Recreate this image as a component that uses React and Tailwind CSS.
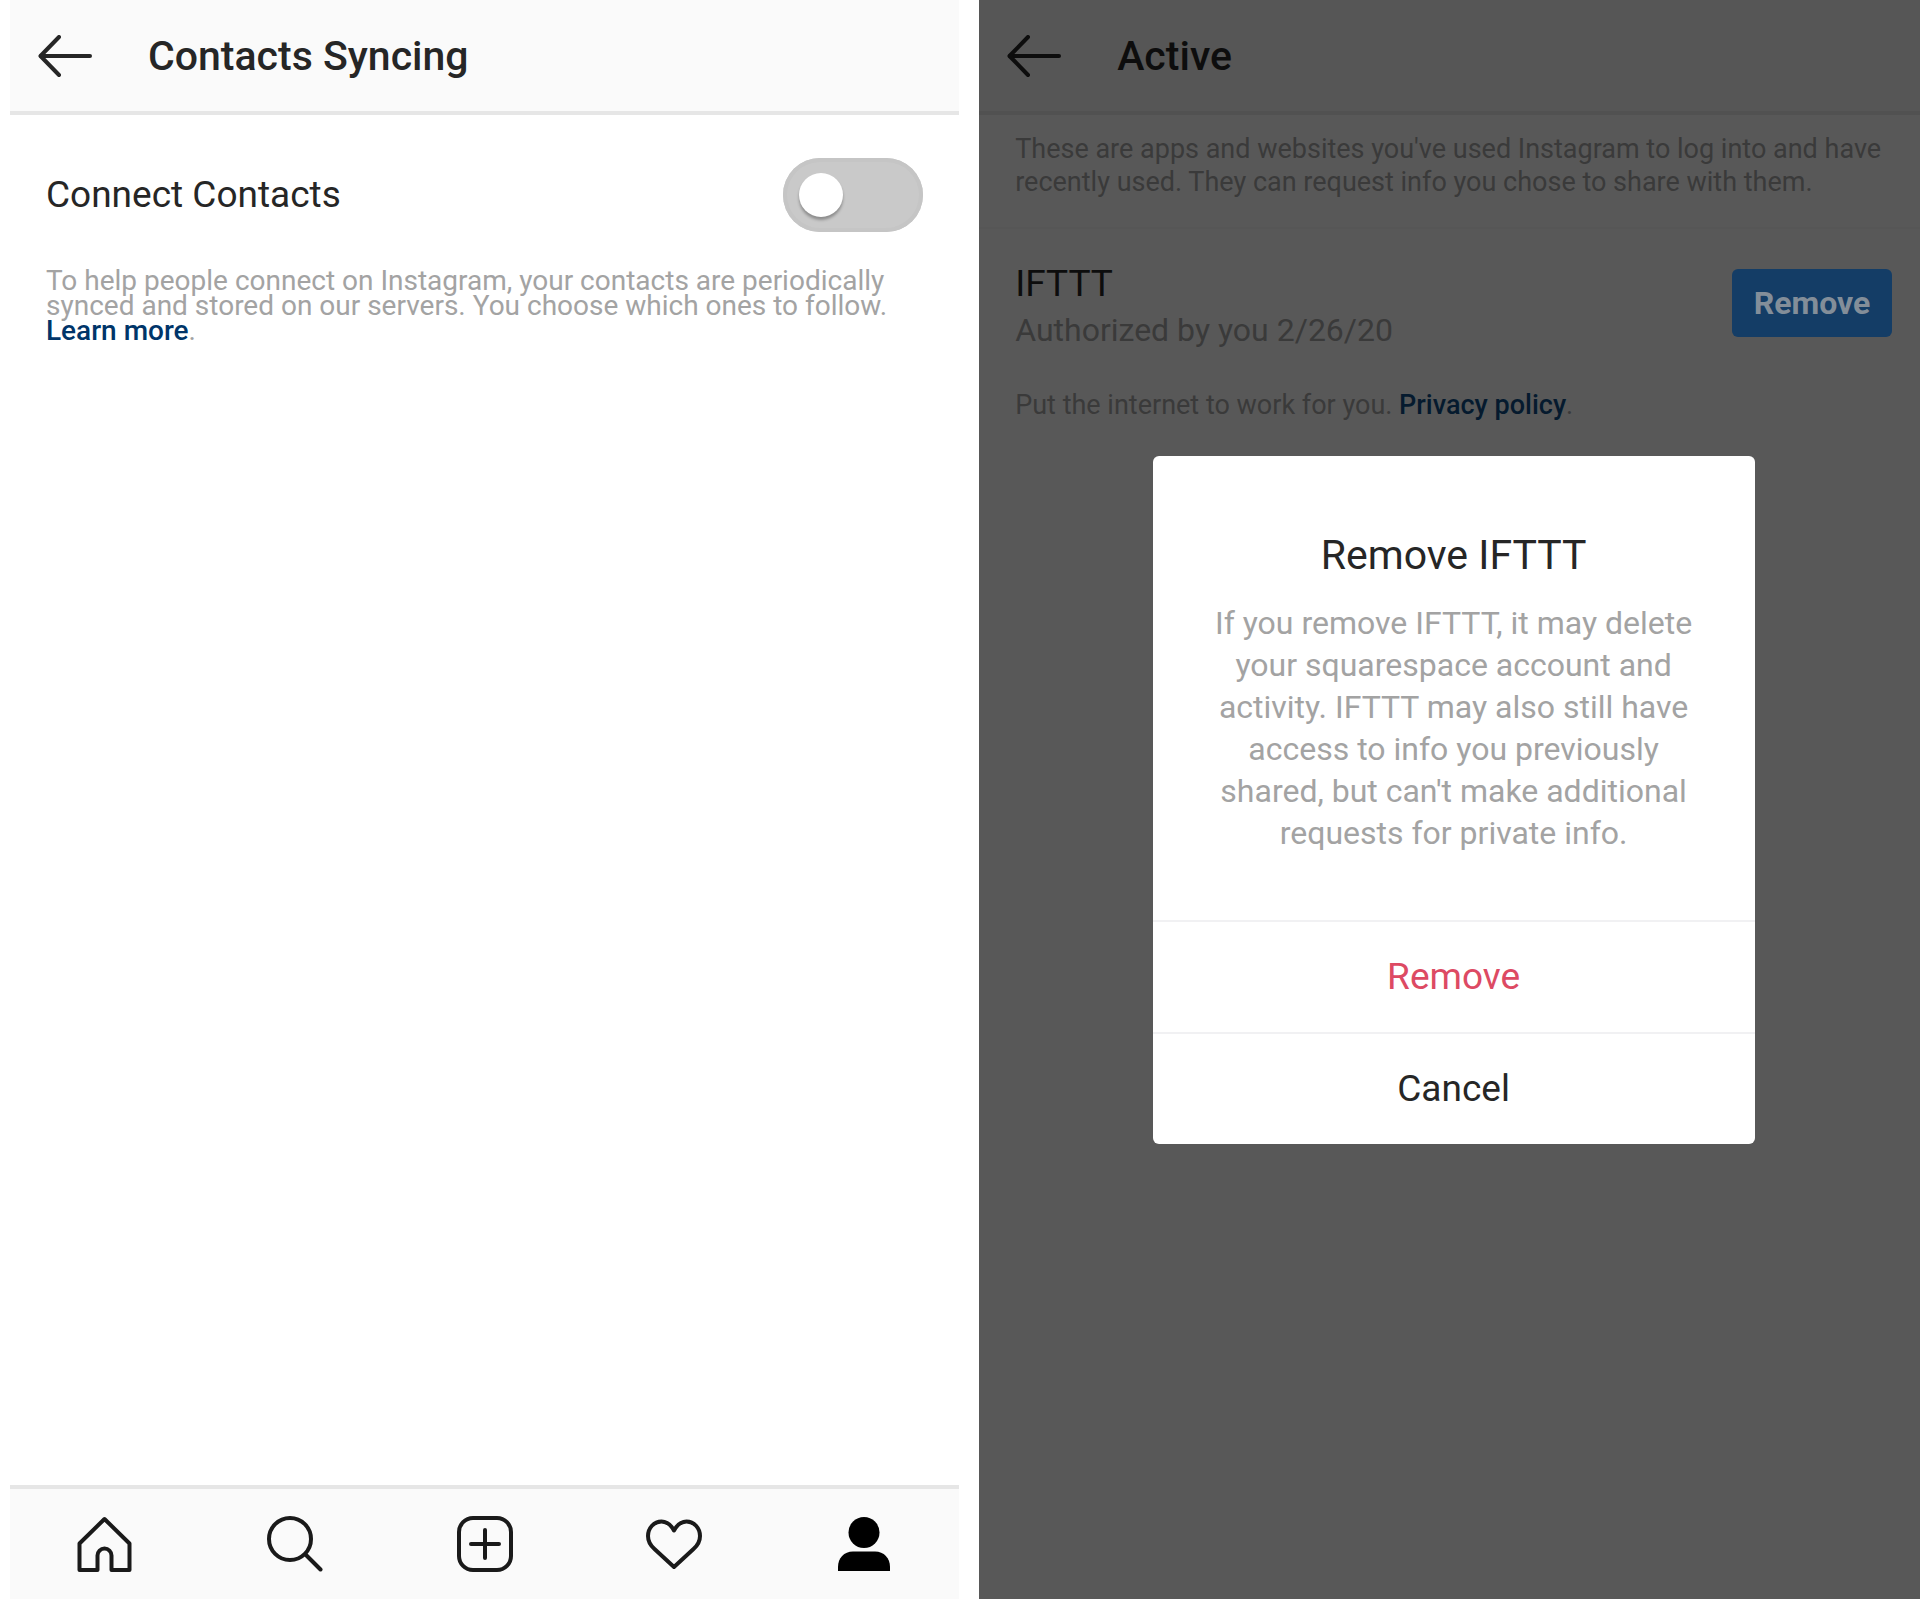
import React, { useState } from 'react';

const BackArrow = () => (
  <svg width="54" height="44" viewBox="0 0 54 44" fill="none" stroke="currentColor" strokeWidth="4" strokeLinecap="round" strokeLinejoin="round">
    <path d="M52 21H3" />
    <path d="M21 2L2.500 21L21 40" />
  </svg>
);

const HomeIcon = () => (
  <svg width="56" height="56" viewBox="0 0 56 56" fill="none" stroke="currentColor" strokeWidth="4" strokeLinejoin="round">
    <path d="M27.500 3L2.500 27.500V54H20.500V39.500a7 7 0 0 1 14 0V54H52.500V27.500Z" />
  </svg>
);

const SearchIcon = () => (
  <svg width="56" height="56" viewBox="0 0 56 56" fill="none" stroke="currentColor" strokeWidth="4" strokeLinecap="round">
    <circle cx="23" cy="23" r="21" />
    <path d="M38.500 38.500L53.500 53.500" />
  </svg>
);

const AddIcon = () => (
  <svg width="56" height="56" viewBox="0 0 56 56" fill="none" stroke="currentColor" strokeWidth="4" strokeLinecap="round">
    <rect x="2" y="2" width="52" height="52" rx="14" />
    <path d="M28 14V42M14 28H42" />
  </svg>
);

const HeartIcon = () => (
  <svg width="56" height="56" viewBox="0 0 56 56" fill="none" stroke="currentColor" strokeWidth="4" strokeLinejoin="round">
    <path d="M28 14.500C25 9 21 5.500 15.500 5.500C8 5.500 2 12 2 20C2 25.500 4.500 29.500 8.500 33L28 51L47.500 33C51.500 29.500 54 25.500 54 20C54 12 48 5.500 40.500 5.500C35 5.500 31 9 28 14.500Z" />
  </svg>
);

const ProfileIcon = () => (
  <svg width="56" height="56" viewBox="0 0 56 56" fill="currentColor">
    <circle cx="28" cy="16.500" r="15.500" />
    <path d="M2 55V51C2 42 8 35.500 17 35.500H39C48 35.500 54 42 54 51V55Z" />
  </svg>
);

const navItems = [
  { label: 'Home', Icon: HomeIcon },
  { label: 'Search', Icon: SearchIcon },
  { label: 'New post', Icon: AddIcon },
  { label: 'Activity', Icon: HeartIcon },
  { label: 'Profile', Icon: ProfileIcon },
];

const ContactsScreen = () => {
  const [connected, setConnected] = useState(false);

  return (
    <section className="flex flex-col bg-white pl-2.5 pr-5 text-[#262626]">
      <header className="flex h-[115px] items-center border-b-4 border-[#e6e6e6] bg-[#fafafa] pt-0.5 pl-7">
        <button aria-label="Back"><BackArrow /></button>
        <h1 className="ml-14 text-[41px] font-medium">Contacts Syncing</h1>
      </header>

      <main className="flex-1 px-9 pt-[43px]">
        <div className="flex items-center justify-between">
          <label htmlFor="connect" className="text-[37px]">Connect Contacts</label>
          <input
            id="connect"
            type="checkbox"
            role="switch"
            checked={connected}
            onChange={(e) => setConnected(e.target.checked)}
            className="flex h-[74px] w-[140px] appearance-none items-center rounded-full bg-[#c9c9c9] px-4 inset-ring-4 inset-ring-[#c5c5c5] before:size-11 before:rounded-full before:bg-white before:shadow-[0_3px_3px_rgba(0,0,0,0.3)] checked:justify-end checked:bg-[#3897f0]"
          />
        </div>
        <p className="mt-9 text-[28px] leading-[25px] text-[#a3a3a3]">
          To help people connect on Instagram, your contacts are periodically synced and stored on our servers. You choose which ones to follow.{' '}
          <a href="#learn" className="font-medium text-[#003569]">Learn more</a>.
        </p>
      </main>

      <nav className="grid h-[114px] grid-cols-5 border-t-4 border-[#e6e6e6] bg-[#fafafa] text-[#1a1a1a]">
        {navItems.map(({ label, Icon }) => (
          <button key={label} aria-label={label} className="flex items-center justify-center last:text-black">
            <Icon />
          </button>
        ))}
      </nav>
    </section>
  );
};

const ActiveScreen = () => (
  <section className="relative bg-[#585858] text-[#0d0d0d]">
    <header className="flex h-[115px] items-center border-b-4 border-[#515151] bg-[#565656] pt-0.5 pl-7">
      <button aria-label="Back"><BackArrow /></button>
      <h1 className="ml-14 text-[41px] font-medium">Active</h1>
    </header>

    <p className="border-b-2 border-[#565656] pt-[18px] pr-4 pb-7 pl-9 text-[27px] leading-[33px] text-[#3a3a3a]">
      These are apps and websites you've used Instagram to log into and have recently used. They can request info you chose to share with them.
    </p>

    <div className="flex items-start justify-between pt-8 pr-7 pl-9">
      <div>
        <h2 className="text-[37px] leading-[46px]">IFTTT</h2>
        <p className="text-[32px] leading-[46px] text-[#3a3a3a]">Authorized by you 2/26/20</p>
      </div>
      <button className="mt-2 h-[68px] w-[160px] rounded-md bg-[#143d66] text-[32px] font-bold text-[#838e99]">Remove</button>
    </div>
    <p className="mt-9 pl-9 text-[27px] leading-[33px] text-[#3a3a3a]">
      Put the internet to work for you. <a href="#privacy" className="font-medium text-[#051a2e]">Privacy policy</a>.
    </p>

    <div className="absolute inset-0 flex items-center justify-center pl-2">
      <div role="dialog" aria-labelledby="dialog-title" className="w-[602px] overflow-hidden rounded-md bg-white text-center text-[#262626]">
        <div className="px-12 pt-[72px] pb-[66px]">
          <h2 id="dialog-title" className="text-[41px] leading-[54px]">Remove IFTTT</h2>
          <p className="mt-5 text-[32px] leading-[42px] text-[#a3a3a3]">
            If you remove IFTTT, it may delete your squarespace account and activity. IFTTT may also still have access to info you previously shared, but can't make additional requests for private info.
          </p>
        </div>
        <button className="h-28 w-full border-t-2 border-[#f1f1f3] text-[37px] text-[#dd4a63]">Remove</button>
        <button className="h-28 w-full border-t-2 border-[#f1f1f3] text-[37px]">Cancel</button>
      </div>
    </div>
  </section>
);

const App = () => (
  <div className="grid min-h-screen grid-cols-[51fr_49fr] bg-white font-['Roboto',sans-serif]">
    <ContactsScreen />
    <ActiveScreen />
  </div>
);

export default App;
